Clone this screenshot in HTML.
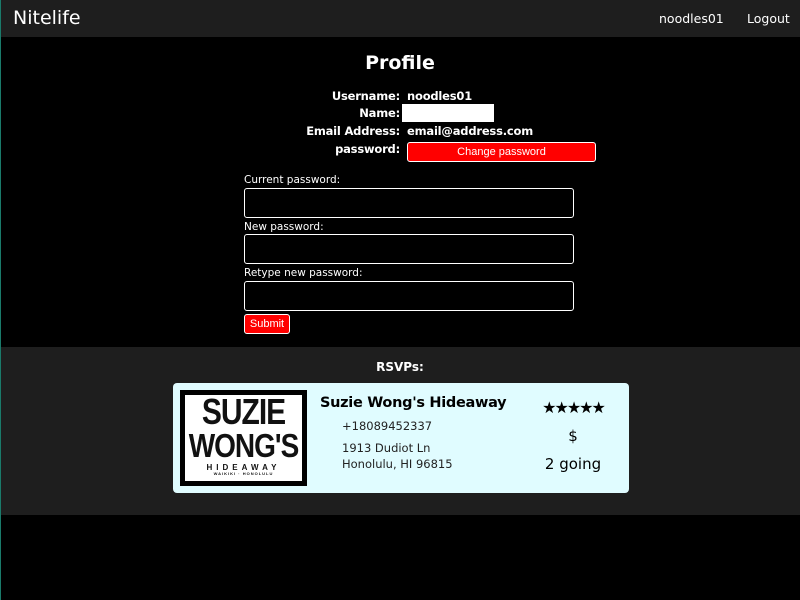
<!DOCTYPE html>
<html><head><meta charset="utf-8"><style>
*{margin:0;padding:0;box-sizing:border-box}
body{width:800px;height:600px;background:#000;font-family:"DejaVu Sans","Liberation Sans",sans-serif;color:#fff;position:relative;overflow:hidden}
.a{position:absolute}
.nav{left:0;top:0;width:800px;height:37px;background:#1e1e1e}
.lbl{font-weight:bold;font-size:11.5px;text-align:right;width:400px;left:0;letter-spacing:-0.2px}
.val{font-weight:bold;font-size:11.5px;left:407px;letter-spacing:-0.2px}
.fl{font-size:10.5px;left:244px}
.inp{left:244px;width:330px;height:30px;border:1px solid #fff;border-radius:3px;background:#000}
</style></head><body>
<div class="a nav"></div>
<div class="a" style="left:0;top:0;width:1px;height:600px;background:#1a7a6a"></div>
<div class="a" style="left:13px;top:7px;font-size:19px">Nitelife</div>
<div class="a" style="left:659px;top:11px;font-size:12.5px">noodles01</div>
<div class="a" style="left:747px;top:11px;font-size:12.5px">Logout</div>
<div class="a" style="left:0;width:800px;text-align:center;top:52px;font-size:19px;font-weight:bold">Profile</div>
<div class="a lbl" style="top:89px">Username:</div><div class="a val" style="top:89px">noodles01</div>
<div class="a lbl" style="top:106px">Name:</div><div class="a" style="left:402px;top:104px;width:92px;height:18px;background:#fff"></div>
<div class="a lbl" style="top:124px">Email Address:</div><div class="a val" style="top:124px">email@address.com</div>
<div class="a lbl" style="top:142px">password:</div>
<div class="a" style="left:407px;top:142px;width:189px;height:20px;background:#f00;border:1px solid #fff;border-radius:3px;font-family:'Liberation Sans',sans-serif;font-size:11px;text-align:center;line-height:18px">Change password</div>
<div class="a fl" style="top:174px">Current password:</div><div class="a inp" style="top:188px"></div>
<div class="a fl" style="top:221px">New password:</div><div class="a inp" style="top:234px"></div>
<div class="a fl" style="top:267px">Retype new password:</div><div class="a inp" style="top:281px"></div>
<div class="a" style="left:244px;top:314px;width:46px;height:20px;background:#f00;border:1px solid #fff;border-radius:3px;font-family:'Liberation Sans',sans-serif;font-size:11px;text-align:center;line-height:18px">Submit</div>
<div class="a" style="left:0;top:347px;width:800px;height:168px;background:#1e1e1e"></div>
<div class="a" style="left:1px;top:347px;width:0;height:168px"></div>
<div class="a" style="left:0;top:0;width:1px;height:600px;background:#1a7a6a"></div>
<div class="a" style="left:0;width:800px;text-align:center;top:360px;font-size:12px;font-weight:bold">RSVPs:</div>
<div class="a" style="left:173px;top:383px;width:456px;height:110px;background:#e0fcff;border-radius:4px;color:#000">
 <div class="a" style="left:7px;top:7px;width:127px;height:96px;background:#000;padding:5px">
  <div style="background:#fff;width:100%;height:100%;text-align:center;font-family:'Liberation Sans',sans-serif;font-weight:900;color:#111;line-height:1">
   <div style="font-size:30px;letter-spacing:-1px;padding-top:3px;transform:scaleY(1.2)">SUZIE</div>
   <div style="font-size:28px;letter-spacing:-1px;padding-top:4px;transform:scaleY(1.2)">WONG'S</div>
   <div style="font-size:8px;letter-spacing:4px;padding-top:4px">HIDEAWAY</div>
   <div style="font-size:4px;letter-spacing:1px">WAIKIKI · HONOLULU</div>
  </div>
 </div>
 <div class="a" style="left:147px;top:12px;font-size:14.5px;font-weight:bold;letter-spacing:-0.3px">Suzie Wong's Hideaway</div>
 <div class="a" style="left:169px;top:36px;font-size:11.5px;color:#222">+18089452337</div>
 <div class="a" style="left:169px;top:57px;font-size:11.5px;color:#222;line-height:16px">1913 Dudiot Ln<br>Honolulu, HI 96815</div>
 <div class="a" style="left:350px;width:100px;text-align:center;top:15px;font-size:16px;letter-spacing:-2px;font-weight:bold">★★★★★</div>
 <div class="a" style="left:350px;width:100px;text-align:center;top:44px;font-size:15px">$</div>
 <div class="a" style="left:350px;width:100px;text-align:center;top:72px;font-size:15px">2 going</div>
</div>
</body></html>
